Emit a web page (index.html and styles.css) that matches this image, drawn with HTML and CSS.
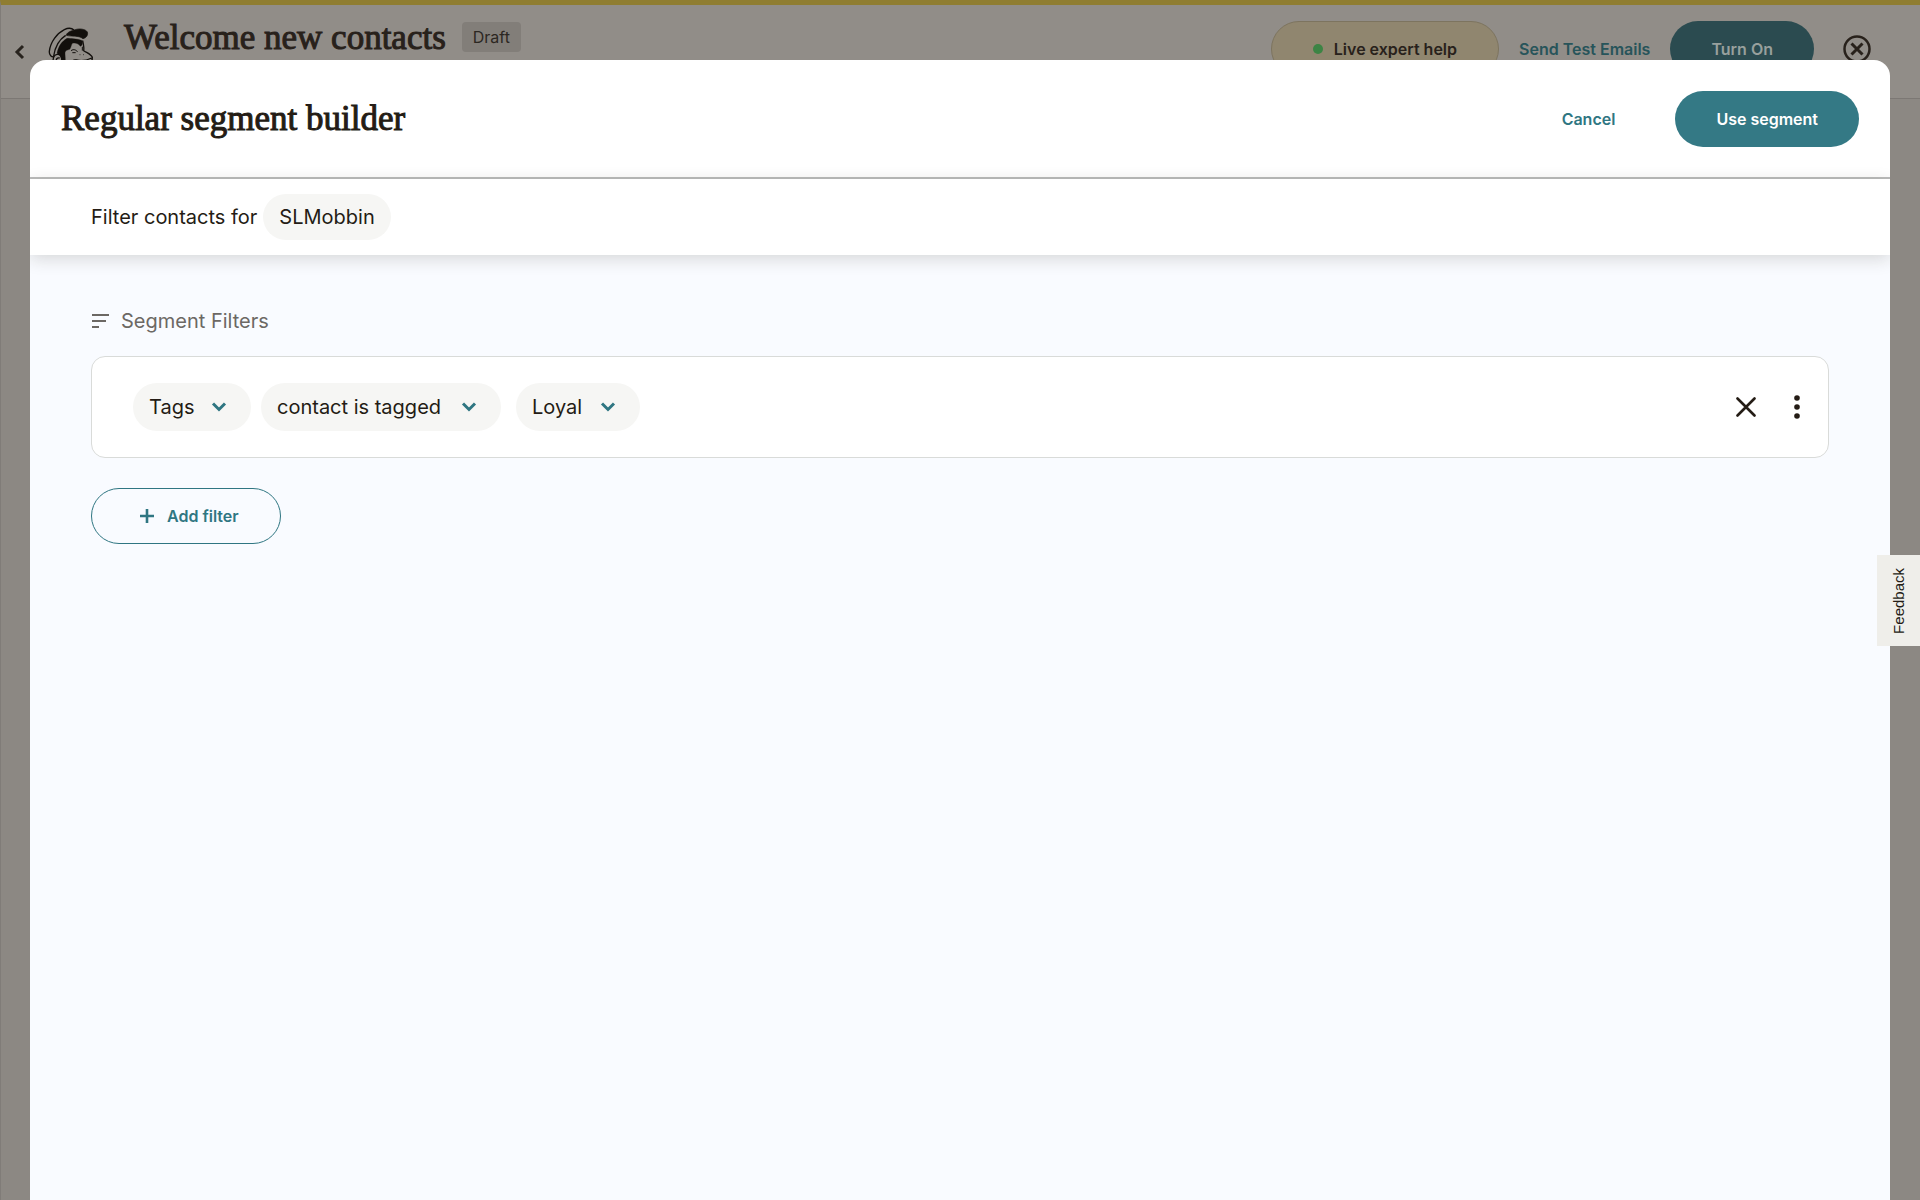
FILE: index.html
```html
<!DOCTYPE html>
<html lang="en">
<head>
<meta charset="utf-8">
<meta name="viewport" content="width=device-width, initial-scale=1">
<title>Regular segment builder</title>
<link rel="stylesheet" href="styles.css">
</head>
<body>
<div class="page">
  <header class="topbar">
    <a class="back" href="#" aria-label="Back">
      <svg width="12" height="16" viewBox="0 0 12 16"><path d="M10 2 4 8 10 14" fill="none" stroke="currentColor" stroke-width="3"/></svg>
    </a>
    <svg class="logo" width="48" height="48" viewBox="50 35 144 144" fill="none" stroke="currentColor" stroke-width="4" stroke-linejoin="round" aria-hidden="true">
      <path d="M72 124C64 126 56 120 57 108C60 80 80 54 102 43C112 38 124 38 131 44"/>
      <path d="M70 122C74 96 84 74 106 60"/>
      <path d="M108 60C108 54 118 47 132 44C146 38 166 41 171 50C174 59 168 68 158 70C146 61 134 64 124 62C118 61 112 62 108 60Z" fill="currentColor" stroke-width="2"/>
      <path d="M80 114C84 94 94 78 110 69C122 70 136 69 156 76C158 84 155 91 150 93C144 84 134 82 126 84C122 90 122 98 118 102C112 104 106 104 104 112C104 128 108 142 100 152C94 144 98 122 80 114Z" fill="currentColor" stroke-width="1"/>
      <path d="M94 140C96 124 90 116 80 117C70 118 66 130 70 142C72 150 80 154 86 152M78 140C76 132 80 126 88 128"/>
      <path d="M157 76C160 90 162 100 160 106C168 112 182 116 186 126C188 136 178 142 168 144C150 148 138 152 128 146C122 138 130 132 138 134C154 138 172 134 184 128"/>
      <path d="M122 106C130 100 138 104 142 110M126 112H136M156 94V106M148 118H150M158 118H160" stroke-width="3"/>
    </svg>
    <h1 class="title page-title">Welcome new contacts</h1>
    <span class="badge">Draft</span>
    <div class="topbar-actions">
      <button class="btn btn-help" type="button"><span class="dot"></span>Live expert help</button>
      <a class="test-link" href="#">Send Test Emails</a>
      <button class="btn btn-on" type="button">Turn On</button>
      <button class="icon-btn btn-exit" type="button" aria-label="Exit">
        <svg width="30" height="30" viewBox="0 0 30 30" fill="none" stroke="currentColor"><circle cx="15" cy="15" r="12.500" stroke-width="2.500"/><path d="M9.500 9.500 20.500 20.500M20.500 9.500 9.500 20.500" stroke-width="3"/></svg>
      </button>
    </div>
  </header>
</div>

<section class="modal" role="dialog" aria-labelledby="modal-title">
  <header class="modal-head">
    <h2 class="title" id="modal-title">Regular segment builder</h2>
    <div class="modal-actions">
      <button class="cancel" type="button">Cancel</button>
      <button class="btn btn-primary" type="button">Use segment</button>
    </div>
  </header>
  <div class="audience">
    <span>Filter contacts for</span>
    <span class="chip audience-chip">SLMobbin</span>
  </div>
  <main class="builder">
    <h3 class="section-label">
      <svg width="18" height="14" viewBox="0 0 18 14" stroke="currentColor" stroke-width="2"><path d="M1 1H18M1 7H15M1 13H8"/></svg>
      Segment Filters
    </h3>
    <div class="filter-card">
      <div class="picker picker-field">
        <select class="chip" aria-label="Field"><option>Tags</option></select>
        <svg width="16" height="12" viewBox="0 0 16 12"><path d="M2 2.500 8 8.500 14 2.500" fill="none" stroke="currentColor" stroke-width="3"/></svg>
      </div>
      <div class="picker picker-operator">
        <select class="chip" aria-label="Operator"><option>contact is tagged</option></select>
        <svg width="16" height="12" viewBox="0 0 16 12"><path d="M2 2.500 8 8.500 14 2.500" fill="none" stroke="currentColor" stroke-width="3"/></svg>
      </div>
      <div class="picker picker-value">
        <select class="chip" aria-label="Tag"><option>Loyal</option></select>
        <svg width="16" height="12" viewBox="0 0 16 12"><path d="M2 2.500 8 8.500 14 2.500" fill="none" stroke="currentColor" stroke-width="3"/></svg>
      </div>
      <div class="card-actions">
        <button class="icon-btn" type="button" aria-label="Remove filter">
          <svg width="20" height="20" viewBox="0 0 20 20"><path d="M1.500 1.500 18.500 18.500M18.500 1.500 1.500 18.500" stroke="currentColor" stroke-width="2.600" stroke-linecap="round"/></svg>
        </button>
        <button class="icon-btn" type="button" aria-label="More options">
          <svg width="6" height="24" viewBox="0 0 6 24" fill="currentColor"><circle cx="3" cy="3" r="2.800"/><circle cx="3" cy="12" r="2.800"/><circle cx="3" cy="21" r="2.800"/></svg>
        </button>
      </div>
    </div>
    <button class="btn btn-add" type="button">
      <svg width="14" height="14" viewBox="0 0 14 14"><path d="M7 0V14M0 7H14" stroke="currentColor" stroke-width="2.600"/></svg>
      Add filter
    </button>
  </main>
</section>

<button class="feedback" type="button">Feedback</button>
</body>
</html>
```
FILE: styles.css
```css
* { box-sizing: border-box; }

body {
  margin: 0;
  color: #241c15;
  font-family: Inter, "Liberation Sans", sans-serif;
  font-size: 20px;
  line-height: 24px;
}

button, select {
  margin: 0;
  padding: 0;
  border: 0;
  background: none;
  color: inherit;
  font: inherit;
}

svg { display: block; flex: none; }

.title {
  margin: 0;
  font-family: "Liberation Serif", serif;
  font-size: 35px;
  font-weight: 400;
  line-height: 40px;
  -webkit-text-stroke: 1px currentColor;
}

.page {
  min-height: 100vh;
  border-top: 5px solid #8f7d31;
  border-left: 1px solid #807c78;
  background: #8c8883;
}

.topbar {
  display: flex;
  align-items: flex-start;
  height: 94px;
  padding: 16px 48px 0 12px;
  border-bottom: 1px solid #7c7874;
  background: #918d88;
}

.back { margin-top: 23px; color: #28231e; }

.logo { margin: 6px 0 0 22px; color: #120f0c; }

.page-title { margin-left: 29px; margin-top: -3px; color: #28211b; }

.badge {
  margin-top: 1px;
  margin-left: 16px;
  padding: 3px 11px;
  border-radius: 4px;
  background: #827e79;
  color: #2c2722;
  font-size: 16px;
}

.topbar-actions {
  display: flex;
  align-items: center;
  margin-left: auto;
}

.btn {
  display: flex;
  align-items: center;
  justify-content: center;
  height: 56px;
  padding: 0 41px;
  border-radius: 28px;
  font-size: 16px;
  font-weight: 600;
}

.btn-help {
  gap: 11px;
  border: 1px solid #7d745f;
  background: #90866f;
  color: #28211b;
}

.dot { width: 10px; height: 10px; border-radius: 5px; background: #3c8444; }

.test-link {
  margin: 0 20px;
  color: #27545a;
  font-size: 16px;
  font-weight: 600;
  text-decoration: none;
}

.btn-on { background: #2b4b50; color: #98a09d; }

.icon-btn { display: flex; align-items: center; }

.btn-exit { margin-left: 28px; color: #28211b; }

.modal {
  position: absolute;
  inset: 60px 30px 0 30px;
  display: flex;
  flex-direction: column;
  overflow: hidden;
  border-radius: 16px 16px 0 0;
  background: #fff;
}

.modal-head {
  display: flex;
  align-items: center;
  justify-content: space-between;
  padding: 31px 31px 30px;
  border-bottom: 2px solid #bbbcbc;
}

.modal-actions { display: flex; align-items: center; gap: 60px; }

.cancel { color: #2f7682; font-size: 16px; font-weight: 600; }

.btn-primary { background: #347985; color: #fff; }

.audience {
  position: relative;
  display: flex;
  align-items: center;
  gap: 6px;
  padding: 15px 61px;
  box-shadow: 0 4px 16px rgba(36, 28, 21, 0.16);
}

.chip {
  height: 48px;
  padding: 0 16px;
  border-radius: 24px;
  background: #f6f6f4;
}

.audience-chip { display: flex; align-items: center; height: 46px; }

.builder { flex: 1; padding: 54px 61px; background: #f9fbff; }

.section-label {
  display: flex;
  align-items: center;
  gap: 12px;
  margin: 0 0 23px;
  color: #6c6864;
  font-size: 20px;
  font-weight: 400;
}

.filter-card {
  display: flex;
  align-items: center;
  min-height: 102px;
  padding: 0 28px 0 41px;
  border: 1px solid #d9dbd9;
  border-radius: 14px;
  background: #fff;
}

.picker { display: grid; align-items: center; color: #2f7682; }

.picker select {
  grid-area: 1 / 1;
  width: 100%;
  appearance: none;
  color: #241c15;
}

.picker svg { grid-area: 1 / 1; justify-self: end; margin-right: 24px; pointer-events: none; }

.picker-field { width: 118px; }
.picker-operator { width: 240px; margin-left: 10px; }
.picker-value { width: 124px; margin-left: 15px; }

.card-actions { display: flex; align-items: center; gap: 38px; margin-left: auto; }

.btn-add {
  gap: 13px;
  margin-top: 30px;
  padding: 0 41px 0 48px;
  border: 1px solid #2f7682;
  color: #2f7682;
}

.feedback {
  position: fixed;
  top: 555px;
  right: 0;
  width: 43px;
  height: 91px;
  background: #efeeea;
  color: #241c15;
  font-family: "Liberation Sans", sans-serif;
  font-size: 15px;
  text-align: center;
  writing-mode: sideways-lr;
}
```
